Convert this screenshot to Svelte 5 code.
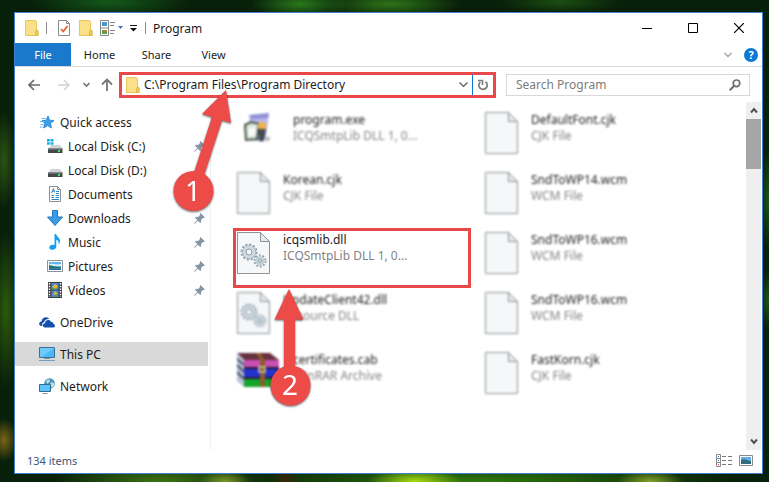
<script lang="ts">
  type Place = { label: string; icon: string; pinned?: boolean };
  type Entry = { name: string; kind: string; icon: string; marked?: boolean; wide?: boolean };

  const tabs = ['Home', 'Share', 'View'];

  const quick: Place[] = [
    { label: 'Local Disk (C:)', icon: 'diskc', pinned: true },
    { label: 'Local Disk (D:)', icon: 'disk', pinned: true },
    { label: 'Documents', icon: 'documents', pinned: true },
    { label: 'Downloads', icon: 'downloads', pinned: true },
    { label: 'Music', icon: 'music', pinned: true },
    { label: 'Pictures', icon: 'pictures', pinned: true },
    { label: 'Videos', icon: 'videos', pinned: true },
  ];

  const roots: Place[] = [
    { label: 'OneDrive', icon: 'onedrive' },
    { label: 'This PC', icon: 'pc' },
    { label: 'Network', icon: 'network' },
  ];

  const files: Entry[] = [
    { name: 'program.exe', kind: 'ICQSmtpLib DLL 1, 0...', icon: 'exe', wide: true },
    { name: 'DefaultFont.cjk', kind: 'CJK File', icon: 'page' },
    { name: 'Korean.cjk', kind: 'CJK File', icon: 'page' },
    { name: 'SndToWP14.wcm', kind: 'WCM File', icon: 'page' },
    { name: 'icqsmlib.dll', kind: 'ICQSmtpLib DLL 1, 0...', icon: 'gears', marked: true },
    { name: 'SndToWP16.wcm', kind: 'WCM File', icon: 'page' },
    { name: 'UpdateClient42.dll', kind: 'Resource DLL', icon: 'gears' },
    { name: 'SndToWP16.wcm', kind: 'WCM File', icon: 'page' },
    { name: 'certificates.cab', kind: 'WinRAR Archive', icon: 'rar', wide: true },
    { name: 'FastKorn.cjk', kind: 'CJK File', icon: 'page' },
  ];

  let path = $state('C:\\Program Files\\Program Directory');
  let query = $state('');
  let current = $state('This PC');
</script>

{#snippet folder()}
  <svg class="folder" width="14" height="16" viewBox="0 0 14 16" aria-hidden="true">
    <path d="M.5.5h10l1 1v8l1.500 1v5H.5z" fill="#fbe08a" stroke="#e9c65c" />
    <path d="M10.500 15.500v-4l1-1.500 1.500 1v4.500z" fill="#f3cf62" stroke="#dcb548" />
  </svg>
{/snippet}

{#snippet placeIcon(kind: string)}
  <svg class="place-icon" width="16" height="16" viewBox="0 0 16 16" aria-hidden="true">
    {#if kind === 'star'}
      <path d="M9 2l1.500 4.200 4.500.3-3.500 2.900 1 4.600-3.900-2.400L4.600 14l1.200-4.600L3 6.600l4.300-.4z" fill="#3aa0ec" stroke="#1c7cd0" stroke-width=".8" />
      <path d="M2.500 4.500h4M1 7.500h4M1.500 10.500h3M1 13h2.500" stroke="#5cb6f2" stroke-width="1" />
    {:else if kind === 'diskc' || kind === 'disk'}
      <path d="M4 7h9l3 4H1z" fill="#cfd2d6" />
      <path d="M1 10.500h14.500v4.500H1z" fill="#45484c" />
      <path d="M1 10.500h14.500v1H1z" fill="#85898e" />
      <path d="M11 12h2v2h-2z" fill="#3df05a" />
      {#if kind === 'diskc'}
        <path d="M0 0h7v7H0z" fill="#fff" />
        <path d="M0 1h2.800v2.500H0zM3.500 1h3v2.500h-3zM0 4.200h2.800v2.500H0zM3.500 4.200h3v2.500h-3z" fill="#12b2ec" />
      {/if}
    {:else if kind === 'documents'}
      <path d="M2.500.5h8l3 3v12h-11z" fill="#fff" stroke="#8b9095" />
      <path d="M10.500.5v3h3" fill="none" stroke="#8b9095" />
      <path d="M4.500 7L6.500 2.500l1 4M5 5h2.500M9 5.500h3M9 7.500h3M4.500 9.500H7M8.500 9.500H12M4.500 11.500h2.500M8.500 11.500H12M4.500 13.500H12" fill="none" stroke="#2f86c8" />
    {:else if kind === 'downloads'}
      <path d="M5.500.5h5V7h5L8 15.500.5 7h5z" fill="#3d9be6" stroke="#1d77c4" />
    {:else if kind === 'music'}
      <path d="M7.500 0h1.700c.2 2.600 3.800 3.500 3.800 7 0 1.600-.8 3-1.500 3.600.5-2.400-.3-4-2.200-4.800v6.800c0 3.900-7 4.300-7 .8 0-2.200 3-3.200 5.200-2.200z" fill="#14a0ee" />
    {:else if kind === 'pictures'}
      <path d="M.5 2.500h15v11H.5z" fill="#fff" stroke="#8d9297" />
      <path d="M2 4h12v8H2z" fill="#62b4ec" />
      <path d="M2 6.500c3-2 5 .5 12-.5v2H2z" fill="#d8f0fa" />
      <path d="M2 7c4 .5 7 2.500 12 2v1.500H2z" fill="#2e7266" />
      <path d="M2 10.500h12V12H2z" fill="#236aa4" />
    {:else if kind === 'videos'}
      <path d="M1 0h14v16H1z" fill="#3c3d40" />
      <path d="M4.500 1h7v6.500h-7zM4.500 8.500h7V15h-7z" fill="#4a87d8" />
      <path d="M5 5l3-3 3 2-2 3zM6 13l2-4 3 3z" fill="#e5b62f" />
      <path d="M5 6h3v1.500H5zM8 13h3v2H8z" fill="#56a03c" />
      <path d="M2.500 1v14M13.500 1v14" stroke="#fff" stroke-width="1.500" stroke-dasharray="1.500 1.200" />
    {:else if kind === 'onedrive'}
      <path d="M2 12C-.8 11.500-.3 7.500 2.500 7.600 2.600 3.500 8 1.800 10.300 5 7.500 4.600 5.500 6 5 8.200 2.800 8.800 2.800 11 3.600 12z" fill="#1450b0" />
      <path d="M6 13.500C3 13.300 3.300 9.500 6 9.300 6 5.600 11 4.900 12 8c2-.3 2.500 1 2.400 2 2.200.4 2 3.500 0 3.500z" fill="#1450b0" />
    {:else if kind === 'pc'}
      <path d="M.5 1.500h15v10H.5z" fill="#4cb8f8" stroke="#3e7093" />
      <path d="M1 2h14L3 11H1z" fill="#86d4ff" opacity=".6" />
      <path d="M5 12.500h6" stroke="#7595ab" />
      <path d="M0 14.500h16" stroke="#7d9bb2" />
    {:else if kind === 'network'}
      <circle cx="10.500" cy="5.500" r="5.300" fill="#4b92b9" />
      <path d="M7 2.500c2-2 5-1 4 .5S9 5 8 6zM12 4l3 1v3l-2 2-2-3z" fill="#b8dfe6" />
      <path d="M.5 6.500h11v7H.5z" fill="#5cc2fa" stroke="#356c92" />
      <path d="M3.500 15.500h5" stroke="#7595ab" />
    {/if}
  </svg>
{/snippet}

{#snippet pin()}
  <svg class="pin" width="11" height="11" viewBox="0 0 11 11" aria-hidden="true">
    <path d="M6.500 0L11 4.500 9.800 5 9 4.900 7 7l.2 2.200-1 .8L4 7.700.4 11 0 10.600 3.300 7 1 4.800l.8-1L4 4l2-2-.2-1z" fill="#8696a4" />
  </svg>
{/snippet}

{#snippet fileIcon(kind: string)}
  {#if kind === 'exe'}
    <svg width="42" height="42" viewBox="0 0 42 42" aria-hidden="true">
      <path d="M12 3l20-2-3 24-3 5-12-2z" fill="#b9b9ea" />
      <path d="M13 3l19-2-1 5-17 1z" fill="#8f8fd8" />
      <path d="M8 13l6-3 8 2-2 15-11 1z" fill="#e0eade" stroke="#45564b" stroke-width="2" />
      <path d="M12 17l5-2 1 8-6 1z" fill="#fafcfa" />
      <circle cx="25" cy="14" r="4" fill="#f1b345" />
      <path d="M21 17h8l-2 12h-5z" fill="#454a50" />
      <path d="M29 25l5 1-5 4z" fill="#a3a6ae" />
    </svg>
  {:else if kind === 'rar'}
    <svg width="42" height="36" viewBox="0 0 42 36" aria-hidden="true">
      <path d="M0 1h33l9 7H7z" fill="#67323f" />
      <path d="M0 1l7 7v27l-7-6z" fill="#b9c2d8" />
      <path d="M0 7l7 6M0 13l7 7M0 20l7 7" stroke="#4a4f68" stroke-width="2" />
      <path d="M7 8h35v7H7z" fill="#c94fb4" />
      <path d="M7 17h35v8H7z" fill="#2333cf" />
      <path d="M7 27h35v8H7z" fill="#16a32a" />
      <path d="M7 15h35v2H7zM7 25h35v2H7z" fill="#2a1b35" />
      <path d="M19 1h4l5 7v27h-5V8z" fill="#8d5b2a" />
      <path d="M22 15h6v5h-6z" fill="none" stroke="#d6cfa5" stroke-width="1.500" />
    </svg>
  {:else}
    <svg width="33" height="42" viewBox="0 0 33 42" aria-hidden="true">
      <path d="M.5.5h23l9 9v32H.5z" fill="#f5f7f9" stroke="#8e9496" />
      <path d="M23.500.5v9h9z" fill="#e5e9ec" stroke="#8e9496" />
      {#if kind === 'gears'}
        <circle cx="12" cy="20" r="7.500" fill="none" stroke="#8fa0aa" stroke-width="2" stroke-dasharray="2 1.930" />
        <circle cx="12" cy="20" r="5" fill="#f5f7f9" stroke="#cfdae0" stroke-width="4" />
        <circle cx="12" cy="20" r="3" fill="#f5f7f9" stroke="#8c9ca6" />
        <circle cx="12" cy="20" r="6.800" fill="none" stroke="#8fa0aa" stroke-width=".6" />
        <circle cx="23" cy="29" r="5.500" fill="none" stroke="#8fa0aa" stroke-width="2" stroke-dasharray="1.700 1.756" />
        <circle cx="23" cy="29" r="3.200" fill="#f5f7f9" stroke="#c3d0d8" stroke-width="3" />
        <circle cx="23" cy="29" r="1.500" fill="#f5f7f9" stroke="#8c9ca6" />
      {/if}
    </svg>
  {/if}
{/snippet}

<div class="desktop">
  <main class="window">
    <header class="titlebar">
      {@render folder()}
      <span class="rule"></span>
      <button class="quick-btn" aria-label="Properties">
        <svg width="12" height="16" viewBox="0 0 12 16">
          <path d="M.5.5h8l3 3v12H.5z" fill="#fff" stroke="#8c8c8c" />
          <path d="M8.500.5v3h3" fill="none" stroke="#8c8c8c" />
          <path d="M3 9l2.200 2.500L9.500 6" fill="none" stroke="#ea5b24" stroke-width="1.700" />
        </svg>
      </button>
      <button class="quick-btn" aria-label="New folder">{@render folder()}</button>
      <button class="quick-btn" aria-label="Layout">
        <svg width="23" height="16" viewBox="0 0 23 16">
          <path d="M.5.5h8v15h-8zM.5 8h8" fill="#fff" stroke="#858585" />
          <path d="M2 2h5v4H2z" fill="#4a97d4" />
          <path d="M2 10h5v4H2z" fill="#5aa346" />
          <path d="M4.500 10H7v2H4.500z" fill="#e2713c" />
          <path d="M10 2.500h5M10 5.500h4M10 10.500h5M10 13.500h4" stroke="#858585" />
          <path d="M18 6h5l-2.500 3z" fill="#4173b8" />
        </svg>
      </button>
      <button class="quick-btn" aria-label="Customize toolbar">
        <svg width="7" height="8" viewBox="0 0 7 8">
          <path d="M0 1.500h7" stroke="#111" />
          <path d="M0 4h7L3.500 7.500z" fill="#111" />
        </svg>
      </button>
      <span class="rule"></span>
      <h1>Program</h1>
      <div class="window-buttons">
        <button aria-label="Minimize">
          <svg width="10" height="10" viewBox="0 0 10 10"><path d="M0 5.500h10" stroke="#000" /></svg>
        </button>
        <button aria-label="Maximize">
          <svg width="10" height="10" viewBox="0 0 10 10"><path d="M.5.5h9v9h-9z" fill="none" stroke="#000" /></svg>
        </button>
        <button aria-label="Close">
          <svg width="10" height="10" viewBox="0 0 10 10"><path d="M0 0l10 10M10 0L0 10" stroke="#000" stroke-width="1.200" /></svg>
        </button>
      </div>
    </header>

    <div class="ribbon">
      <button class="file-tab">File</button>
      {#each tabs as tab}
        <button class="tab">{tab}</button>
      {/each}
      <button class="expand" aria-label="Expand the ribbon">
        <svg width="8" height="6" viewBox="0 0 8 6"><path d="M.5 1L4 4.500 7.500 1" fill="none" stroke="#a0a0a0" stroke-width="1.300" /></svg>
      </button>
      <button class="help" aria-label="Help">?</button>
    </div>

    <div class="toolbar">
      <button class="nav-btn" aria-label="Back">
        <svg width="12" height="12" viewBox="0 0 12 12"><path d="M12 6H1M6 1L1 6l5 5" fill="none" stroke="#6b6b6b" stroke-width="1.700" /></svg>
      </button>
      <button class="nav-btn forward" aria-label="Forward">
        <svg width="12" height="12" viewBox="0 0 12 12"><path d="M0 6h11M6 1l5 5-5 5" fill="none" stroke="#d4d4d4" stroke-width="1.500" /></svg>
      </button>
      <button class="nav-btn recent" aria-label="Recent locations">
        <svg width="7" height="6" viewBox="0 0 7 6"><path d="M.5 1l3 3 3-3" fill="none" stroke="#777" stroke-width="1.600" /></svg>
      </button>
      <button class="nav-btn" aria-label="Up">
        <svg width="12" height="13" viewBox="0 0 12 13"><path d="M6 13V1.500M1 6.500l5-5 5 5" fill="none" stroke="#757575" stroke-width="1.800" /></svg>
      </button>

      <div class="address">
        {@render folder()}
        <input type="text" aria-label="Address" spellcheck="false" bind:value={path} />
        <button class="history" aria-label="Previous locations">
          <svg width="9" height="6" viewBox="0 0 9 6"><path d="M.5.5l4 4 4-4" fill="none" stroke="#555" stroke-width="1.200" /></svg>
        </button>
        <button class="refresh" aria-label="Refresh">
          <svg width="12" height="12" viewBox="0 0 12 12">
            <path d="M8.500 2.800A4.200 4.200 0 1 1 3.300 3" fill="none" stroke="#7c7c7c" stroke-width="1.700" />
            <path d="M1 1.500h4.500V6" fill="none" stroke="#7c7c7c" stroke-width="1.600" />
          </svg>
        </button>
      </div>

      <div class="search">
        <input type="text" aria-label="Search Program" placeholder="Search Program" bind:value={query} />
        <svg width="12" height="12" viewBox="0 0 12 12" aria-hidden="true">
          <circle cx="7.500" cy="4.300" r="3.300" fill="none" stroke="#6f6f6f" stroke-width="1.700" />
          <path d="M5.200 6.800L.7 11.300" stroke="#6f6f6f" stroke-width="2" />
        </svg>
      </div>
    </div>

    <div class="body">
      <nav class="sidebar" aria-label="Folders">
        <a class="place" href="#quick">{@render placeIcon('star')}<span>Quick access</span></a>
        {#each quick as place}
          <a class="place child" href="#{place.icon}">
            {@render placeIcon(place.icon)}<span>{place.label}</span>
            {#if place.pinned}{@render pin()}{/if}
          </a>
        {/each}
        {#each roots as place}
          <a
            class="place root"
            class:current={current === place.label}
            href="#{place.icon}"
            onclick={() => (current = place.label)}
          >
            {@render placeIcon(place.icon)}<span>{place.label}</span>
          </a>
        {/each}
      </nav>

      <ul class="files">
        {#each files as file}
          <li class="file" class:marked={file.marked} class:wide={file.wide}>
            {@render fileIcon(file.icon)}
            <div class="caption">
              <span class="name">{file.name}</span>
              <span class="kind">{file.kind}</span>
            </div>
          </li>
        {/each}
      </ul>

      <div class="scrollbar">
        <button aria-label="Scroll up">
          <svg width="8" height="7" viewBox="0 0 8 7"><path d="M1 5.500l3-3.500 3 3.500" fill="none" stroke="#505050" stroke-width="2" /></svg>
        </button>
        <div class="thumb"></div>
        <button class="down" aria-label="Scroll down">
          <svg width="8" height="7" viewBox="0 0 8 7"><path d="M1 1.500L4 5l3-3.500" fill="none" stroke="#505050" stroke-width="2" /></svg>
        </button>
      </div>
    </div>

    <footer class="status">
      <span>134 items</span>
      <button class="details" aria-label="Details view">
        <svg width="16" height="13" viewBox="0 0 16 13">
          <path d="M.5.500h4v12h-4zM.5 4.500h4M.5 8.500h4" fill="#fff" stroke="#8a8a8a" />
          <path d="M2 2h1v1H2zM2 6h1v1H2z" fill="#2d77c2" />
          <path d="M2 10h1v1H2z" fill="#d33" />
          <path d="M6 2.500h4M12 2.500h4M6 6.500h4M12 6.500h4M6 10.500h4M12 10.500h4" stroke="#777" />
        </svg>
      </button>
      <button aria-label="Thumbnail view">
        <svg width="14" height="11" viewBox="0 0 14 11">
          <path d="M.5.500h13v10H.5z" fill="#fff" stroke="#8a8a8a" />
          <path d="M2 2h10v7H2z" fill="#66aee8" />
          <path d="M2 5c4-2 6 1 10 1v3H2z" fill="#2d6f80" />
        </svg>
      </button>
    </footer>

    <!-- step callouts, drawn over the window -->
    <svg class="callouts" width="320" height="420" viewBox="14 12 320 420">
      <path d="M226 90L231 123 222 120.200 198 194 188 191 212 117 202 114z" fill="#ec4b48" />
      <circle cx="193.500" cy="191" r="20" fill="#ec4b48" />
      <text x="193" y="201">1</text>
      <path d="M289 289L303.500 319.500H295V380H284V319.500H274.500z" fill="#ec4b48" />
      <circle cx="290.500" cy="385.500" r="20" fill="#ec4b48" />
      <text x="290" y="395">2</text>
    </svg>
  </main>
</div>

<style>
  :global(body) {
    margin: 0;
  }

  .desktop {
    box-sizing: border-box;
    min-height: 100vh;
    padding: 12px 6px 8px 14px;
    background:
      radial-gradient(ellipse 48px 14px at 415px 100%, #a9dd12, transparent),
      radial-gradient(ellipse 34px 12px at 650px 100%, #86a32a, transparent),
      radial-gradient(ellipse 14px 20px at 285px 100%, #3a2408, transparent),
      radial-gradient(ellipse 26px 12px at 225px 100%, #7d9a2a, transparent),
      radial-gradient(ellipse 110px 24px at 160px 100%, #3c7414, transparent),
      radial-gradient(ellipse 260px 24px at 480px 100%, #2f7a0c, transparent),
      radial-gradient(ellipse 14px 22px at 4px 440px, #7b6216, transparent),
      radial-gradient(ellipse 14px 80px at 6px 310px, #2d5a0c, transparent),
      radial-gradient(ellipse 12px 50px at 4px 160px, #2c5212, transparent),
      radial-gradient(ellipse 80px 16px at 110px 2px, #14581a, transparent),
      radial-gradient(ellipse 50px 14px at 300px 4px, #2a7a1c, transparent),
      radial-gradient(ellipse 70px 14px at 390px 4px, #2f7418, transparent),
      radial-gradient(ellipse 60px 12px at 560px 2px, #1c4e12, transparent),
      radial-gradient(ellipse 10px 50px at 100% 200px, #1d5415, transparent),
      radial-gradient(ellipse 10px 30px at 100% 300px, #1d5415, transparent),
      #07200a;
    font-family: 'Noto Sans', 'Open Sans', sans-serif;
    font-size: 12px;
    color: #1c1c1c;
  }

  .window {
    position: relative;
    display: flex;
    flex-direction: column;
    box-sizing: border-box;
    min-height: calc(100vh - 20px);
    background: #fff;
    border: 1px solid #3f7fce;
  }

  button {
    display: flex;
    align-items: center;
    justify-content: center;
    padding: 0;
    border: 0;
    background: none;
    color: inherit;
    font: inherit;
  }

  svg {
    display: block;
    flex: none;
  }

  .titlebar {
    display: flex;
    align-items: center;
    height: 30px;
    padding-left: 10px;
  }

  .rule {
    width: 1px;
    height: 12px;
    margin: 0 7px;
    background: #8c8c8c;
  }

  .titlebar .quick-btn {
    margin-right: 7px;
  }

  .titlebar .quick-btn:first-of-type {
    margin: 0 9px 0 4px;
  }

  .titlebar .quick-btn:last-of-type {
    margin-right: 1px;
  }

  h1 {
    margin: 0;
    font-size: 12px;
    font-weight: 400;
  }

  .window-buttons {
    display: flex;
    margin-left: auto;
  }

  .window-buttons button {
    width: 46px;
    height: 30px;
  }

  .ribbon {
    display: flex;
    height: 23px;
    border-bottom: 1px solid #dadbdc;
    font-size: 11px;
  }

  .file-tab {
    width: 56px;
    background: #1a79cb;
    color: #fff;
  }

  .tab {
    width: 57px;
  }

  .expand {
    margin-left: auto;
  }

  .help {
    align-self: center;
    width: 14px;
    height: 14px;
    margin: 0 4px 0 12px;
    border-radius: 50%;
    background: #0a78d6;
    color: #fff;
    font-weight: 700;
  }

  .toolbar {
    display: flex;
    align-items: center;
    height: 35px;
    padding: 0 12px 0 13px;
  }

  .nav-btn {
    margin-right: 6px;
  }

  .forward {
    margin: 0 13px 0 12px;
  }

  .recent {
    margin-right: 11px;
  }

  .address {
    display: flex;
    flex: 1;
    align-items: center;
    box-sizing: border-box;
    min-width: 0;
    height: 26px;
    padding-left: 4px;
    border: 3px solid #e8484a;
  }

  input {
    flex: 1;
    min-width: 0;
    padding: 0;
    border: 0;
    outline: 0;
    background: none;
    color: inherit;
    font: inherit;
  }

  .address input {
    margin-left: 4px;
  }

  .history {
    width: 17px;
    height: 20px;
  }

  .refresh {
    width: 21px;
    height: 20px;
    border-left: 1px solid #0a78d6;
  }

  .search {
    display: flex;
    flex: none;
    align-items: center;
    box-sizing: border-box;
    width: 244px;
    height: 22px;
    margin-left: 10px;
    padding: 0 8px 0 9px;
    border: 1px solid #d9d9d9;
  }

  .search input::placeholder {
    color: #7c7c7c;
    opacity: 1;
  }

  .body {
    display: flex;
    flex: 1;
  }

  .sidebar {
    flex: none;
    width: 193px;
    padding: 8px 2px 0 0;
    border-right: 1px solid #f0f0f0;
  }

  .place {
    display: flex;
    align-items: center;
    gap: 5px;
    height: 24px;
    padding: 0 3px 0 24px;
    color: inherit;
    text-decoration: none;
    white-space: nowrap;
  }

  .child {
    padding-left: 32px;
  }

  .root {
    margin-top: 8px;
  }

  .current {
    background: #d9d9d9;
  }

  .pin {
    margin-left: auto;
  }

  .files {
    display: grid;
    flex: 1;
    grid-template-columns: repeat(auto-fill, 238px);
    grid-auto-rows: 60px;
    align-content: start;
    column-gap: 10px;
    margin: 0;
    padding: 6px 0 0 22px;
    list-style: none;
  }

  .file {
    display: flex;
    gap: 13px;
    box-sizing: border-box;
    padding: 4px;
    filter: blur(1px);
  }

  .file.marked {
    padding: 1px;
    border: 3px solid #e8484a;
    filter: none;
  }

  .wide {
    gap: 14px;
  }

  .caption {
    display: flex;
    flex-direction: column;
    line-height: 16px;
    white-space: nowrap;
  }

  .kind {
    color: #848484;
  }

  .scrollbar {
    display: flex;
    flex: none;
    flex-direction: column;
    width: 15px;
    margin-right: 1px;
    background: #efefef;
  }

  .scrollbar button {
    height: 17px;
  }

  .thumb {
    height: 50px;
    background: #a6a6a6;
  }

  .down {
    margin-top: auto;
  }

  .status {
    display: flex;
    align-items: center;
    box-sizing: border-box;
    height: 23px;
    padding: 0 9px 2px 12px;
    color: #3b567d;
    font-size: 11px;
  }

  .details {
    margin: 0 7px 0 auto;
  }

  .callouts {
    position: absolute;
    top: -1px;
    left: -1px;
    filter: drop-shadow(0 1px 1px rgba(0, 0, 0, 0.6));
    pointer-events: none;
  }

  .callouts text {
    fill: #fff;
    font-size: 28px;
    text-anchor: middle;
  }
</style>
